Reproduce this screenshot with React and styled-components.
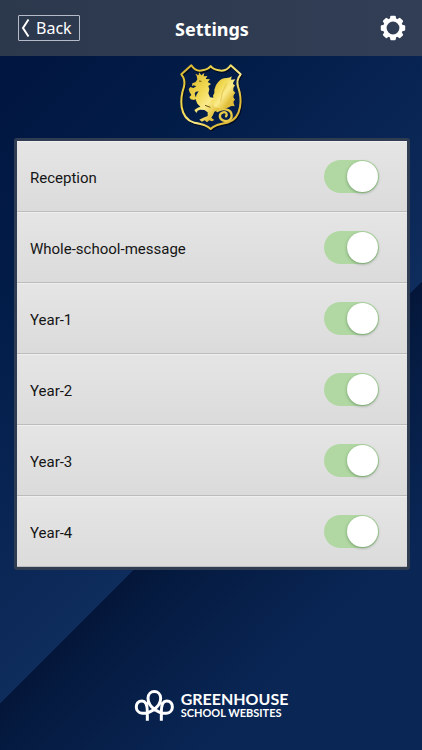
import { useState } from "react";
import styled, { createGlobalStyle } from "styled-components";

const groups = [
    "Reception",
    "Whole-school-message",
    "Year-1",
    "Year-2",
    "Year-3",
    "Year-4",
];

const teeth = [0, 45, 90, 135, 180, 225, 270, 315];

const shield = "M65 28 C74 42 88 46 99 43 C110 41 119 36 123 30 C127 36 136 41 147 43 C160 46 174 42 183 28 L213 55 C204 66 200 76 205 92 C212 112 215 132 211 153 C207 178 194 194 173 200 C151 204 133 207 123 219 C113 207 95 204 73 200 C53 194 40 178 36 153 C33 132 36 112 43 92 C47 76 44 66 35 55Z";

function Gear(){
    return(
        <svg width="26" height="26" viewBox="-13 -13 26 26" aria-hidden="true">
            <circle r="8.2" fill="none" stroke="#fff" strokeWidth="3.6" />
            {teeth.map(angle => (
                <path
                    key={angle}
                    d="M-3.2 -8.8 L-2.7 -11.4 Q-2.5 -12.2 -1.7 -12.2 H1.7 Q2.5 -12.2 2.7 -11.4 L3.2 -8.8Z"
                    fill="#fff"
                    transform={`rotate(${angle})`}
                />
            ))}
        </svg>
    )
}

function Crest(){
    return(
        <svg width="84" height="82" viewBox="-2 0 252 246" role="img" aria-label="School crest">
            <defs>
                <linearGradient id="gold" x1="0" y1="0" x2="1" y2="1">
                    <stop offset="0" stopColor="#d9b32c" />
                    <stop offset="0.35" stopColor="#f0d850" />
                    <stop offset="0.55" stopColor="#faeb8c" />
                    <stop offset="0.75" stopColor="#e3c03c" />
                    <stop offset="1" stopColor="#d9b235" />
                </linearGradient>
            </defs>
            <path
                d={shield}
                fill="none"
                stroke="#030d22"
                strokeWidth="6"
                strokeLinejoin="round"
                transform="translate(3 4)"
            />
            <path
                d={shield}
                fill="none"
                stroke="url(#gold)"
                strokeWidth="6"
                strokeLinejoin="round"
            />
            {/* head, neck, body and legs */}
            <path
                d="M81 60 L77 53 L87 58 L88 49 L95 58 L104 51 L102 61 L113 60 L108 69 L121 70 L114 78 L124 84 L116 90 L119 100 L116 112 L121 124 L150 128 L174 150 L160 161 L145 163 L134 167 L130 177 L125 185 L134 192 L127 196 L119 193 L112 199 L105 193 L97 197 L89 191 L101 185 L114 180 L114 169 L104 162 L91 161 L84 164 L80 171 L74 162 L84 155 L92 152 L83 143 L78 131 L80 117 L87 106 L79 107 L75 112 L77 121 L82 127 L73 132 L63 130 L59 123 L65 117 L60 109 L57 100 L62 93 L71 96 L80 91 L72 88 L67 91 L68 82 L78 78 L83 70Z"
                fill="url(#gold)"
            />
            {/* wing */}
            <path
                d="M123 134 L132 131 L130 119 Q136 111 134 101 Q137 87 145 79 Q154 66 171 66 Q181 66 186 61 L184 71 L197 70 Q190 78 190 84 L196 88 Q189 96 191 104 L197 110 Q189 118 191 124 L196 131 Q189 136 192 142 L195 151 Q185 148 178 154 L160 160 L135 153Z"
                fill="url(#gold)"
            />
            <path
                d="M153 137 Q154 110 171 82 M174 148 Q176 134 187 120"
                stroke="#dcb83e"
                strokeWidth="2"
                fill="none"
            />
            {/* coiled tail */}
            <path
                d="M143 165 C162 155 186 159 186 179 C186 194 171 198 160 193 C147 187 148 172 160 169 C169 166 174 174 169 181"
                stroke="#e8c949"
                strokeWidth="7"
                strokeLinecap="round"
                fill="none"
            />
            <path d="M88 75 L95 76 M106 148 L122 154" stroke="#66510f" strokeWidth="3" fill="none" />
        </svg>
    )
}

function Trees(){
    return(
        <svg width="41" height="31" viewBox="45 26 123 93" aria-hidden="true">
            <g fill="none" stroke="#fff" strokeWidth="9">
                <path d="M85 118 V91 C85 72 81 59 69 59 C46 59 46 94 70 96 C90 97 125 79 125 51 C125 24 87 24 87 51 C87 79 122 97 142 96 C166 94 166 59 143 59 C131 59 127 72 127 91 V118" />
            </g>
        </svg>
    )
}

function GroupRow({ name }){
    const [enabled, setEnabled] = useState(true)
    return(
        <Row>
            <RowName>{name}</RowName>
            <Toggle
                type="checkbox"
                role="switch"
                checked={enabled}
                onChange={() => setEnabled(prev => !prev)}
            />
        </Row>
    )
}

function App(){
    return(
        <Page>
            <GlobalStyle />
            <Header>
                <BackButton type="button">
                    <svg width="9" height="20" viewBox="0 0 9 20" aria-hidden="true">
                        <path d="M7.5 1.5 L2 10 L7.5 18.5" fill="none" stroke="#fff" strokeWidth="2" />
                    </svg>
                    Back
                </BackButton>
                <Title>Settings</Title>
                <GearButton type="button" aria-label="Settings menu">
                    <Gear />
                </GearButton>
            </Header>
            <main>
                <CrestHolder>
                    <Crest />
                </CrestHolder>
                <Panel>
                    {groups.map(name => (
                        <GroupRow key={name} name={name} />
                    ))}
                </Panel>
            </main>
            <Footer>
                <Trees />
                <Brand>
                    <BrandName>GREENHOUSE</BrandName>
                    <BrandLine>SCHOOL WEBSITES</BrandLine>
                </Brand>
            </Footer>
        </Page>
    )
}

export default App;

const GlobalStyle = createGlobalStyle`
    * {
        box-sizing: border-box;
    }

    body {
        margin: 0;
        background: #0a2757;
    }
`;

const Page = styled.div`
    display: flex;
    flex-direction: column;
    min-height: 100vh;
    font-family: Roboto, sans-serif;
    background: linear-gradient(
        135deg,
        #00143e 0%,
        #021c48 25%,
        #0e2c5c 60%,
        #04173a 60%,
        #07204a 72%,
        #092655 82%,
        #092655 100%
    );
`;

const Header = styled.header`
    display: grid;
    grid-template-columns: 1fr auto 1fr;
    align-items: center;
    height: 56px;
    padding: 0 16px 0 18px;
    color: #fff;
    font-family: "Noto Sans", sans-serif;
    background: linear-gradient(90deg, #2c384c, #323e55);
`;

const BackButton = styled.button`
    display: flex;
    align-items: center;
    justify-self: start;
    gap: 6px;
    height: 26px;
    padding: 0 7px 0 2px;
    border: 1px solid #b4bac8;
    border-radius: 1px;
    background: none;
    color: inherit;
    font-family: inherit;
    font-size: 16px;
    line-height: 24px;
    cursor: pointer;
`;

const Title = styled.h1`
    margin: 0;
    padding-top: 2px;
    font-size: 18px;
    font-weight: 700;
    line-height: 24px;
`;

const GearButton = styled.button`
    display: flex;
    justify-self: end;
    padding: 0;
    border: 0;
    background: none;
    cursor: pointer;
`;

const CrestHolder = styled.div`
    display: flex;
    justify-content: center;
`;

const Panel = styled.section`
    margin: 0 12px 0 14px;
    border: 3px solid #303c52;
    border-radius: 3px;
`;

const Row = styled.label`
    display: flex;
    align-items: center;
    justify-content: space-between;
    height: 71px;
    padding: 0 28px 0 13px;
    border-top: 1px solid #efefef;
    border-bottom: 1px solid #bcbcbc;
    background: linear-gradient(#e5e5e5, #dbdbdb);
    color: #151515;
`;

const RowName = styled.span`
    padding-top: 2px;
    font-size: 15px;
    line-height: 20px;
`;

const Toggle = styled.input`
    appearance: none;
    flex: none;
    display: flex;
    align-items: center;
    justify-content: ${props => props.checked ? "flex-end" : "flex-start"};
    width: 55px;
    height: 33px;
    margin: 0;
    padding: 1px;
    border-radius: 17px;
    background: ${props => props.checked ? "#b1d8a3" : "#c4c4c4"};
    cursor: pointer;

    &::before{
        content: "";
        width: 31px;
        height: 31px;
        border-radius: 50%;
        background: #fff;
        box-shadow: 0 1px 3px rgba(40, 90, 40, 0.5);
    }
`;

const Footer = styled.footer`
    display: flex;
    align-items: center;
    justify-content: center;
    gap: 6px;
    margin-top: auto;
    padding-bottom: 29px;
    color: #fff;
    font-family: Lato, sans-serif;
`;

const Brand = styled.div`
    display: flex;
    flex-direction: column;
    font-weight: 700;
`;

const BrandName = styled.span`
    font-size: 16px;
    line-height: 14px;
`;

const BrandLine = styled.span`
    font-size: 11px;
    line-height: 14px;
`;
